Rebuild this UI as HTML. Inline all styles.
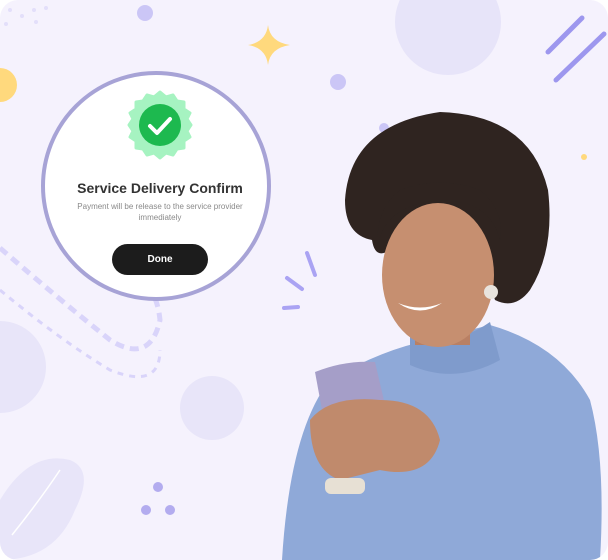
<!DOCTYPE html>
<html><head><meta charset="utf-8"><style>
html,body{margin:0;padding:0;background:#fff;}
.wrap{position:relative;width:608px;height:560px;overflow:hidden;background:#f5f2fd;border-radius:18px;font-family:"Liberation Sans",sans-serif;}
svg{position:absolute;left:0;top:0}
.t{position:absolute;left:40px;width:240px;text-align:center}
</style></head><body><div class="wrap">
<svg width="608" height="560" viewBox="0 0 608 560">
<circle cx="448" cy="22" r="53" fill="#e7e4f9"/>
<circle cx="145" cy="13" r="8" fill="#cbc6f6"/>
<circle cx="338" cy="82" r="8" fill="#cbc6f6"/>
<circle cx="384" cy="128" r="5" fill="#cbc6f6"/>
<circle cx="0" cy="85" r="17" fill="#ffd97d"/>
<circle cx="584" cy="157" r="3" fill="#ffd97d"/>
<path d="M268 25 Q270 42 290 45 Q270 48 268 65 Q266 48 248 45 Q266 42 268 25Z" fill="#ffd97d"/>
<g stroke="#9d97ee" stroke-width="5" stroke-linecap="round"><line x1="548" y1="52" x2="582" y2="18"/><line x1="556" y1="80" x2="604" y2="34"/></g>
<g fill="#e3dffa"><circle cx="10" cy="10" r="2"/><circle cx="22" cy="16" r="2"/><circle cx="34" cy="10" r="2"/><circle cx="46" cy="8" r="2"/><circle cx="6" cy="24" r="2"/><circle cx="36" cy="22" r="2"/></g>
<circle cx="0" cy="367" r="46" fill="#e8e5f9"/>
<circle cx="212" cy="408" r="32" fill="#e8e5f9"/>
<path d="M0 500 Q30 450 70 460 Q95 470 75 510 Q55 560 0 560Z" fill="#e8e5f9"/>
<path d="M12 535 Q40 500 60 470" stroke="#fff" stroke-width="1.5" fill="none"/>
<path d="M0 248 Q60 300 110 340 Q150 365 160 320 Q158 300 150 290" stroke="#d9d4fa" stroke-width="5" stroke-dasharray="9 6" fill="none"/>
<path d="M0 290 Q60 340 110 370 Q160 390 160 350" stroke="#d9d4fa" stroke-width="3" stroke-dasharray="6 6" fill="none"/>
<g fill="#b3acef"><circle cx="158" cy="487" r="5"/><circle cx="146" cy="510" r="5"/><circle cx="170" cy="510" r="5"/></g>
<g stroke="#aaa3f3" stroke-width="4" stroke-linecap="round"><line x1="307" y1="253" x2="315" y2="275"/><line x1="287" y1="278" x2="302" y2="289"/><line x1="284" y1="308" x2="298" y2="307"/></g>
<!-- woman -->
<path d="M282 560 Q290 430 330 380 Q380 350 430 340 L490 325 Q560 345 590 400 Q606 460 600 560Z" fill="#8fa9d8"/>
<path d="M410 330 Q450 350 490 322 L500 360 Q455 385 410 365Z" fill="#7f9bcc"/>
<path d="M345 200 Q350 125 440 112 Q530 115 548 190 Q555 250 530 290 Q515 310 495 300 L480 250 L390 250 Q375 260 372 240 Q345 235 345 200Z" fill="#2f2420"/>
<rect x="415" y="300" width="55" height="45" fill="#b98064"/>
<ellipse cx="438" cy="275" rx="56" ry="72" fill="#c68f70"/>
<path d="M378 245 Q385 205 440 200 Q490 200 500 240 Q505 210 480 190 Q440 175 400 190 Q375 210 378 245Z" fill="#2f2420"/>
<circle cx="491" cy="292" r="7" fill="#e8e3dd"/>
<path d="M398 303 Q420 318 442 303 Q420 312 398 303Z" fill="#fff"/>
<path d="M315 372 Q345 360 375 362 L385 405 Q350 410 322 410Z" fill="#a59ec8"/>
<path d="M310 420 Q330 395 380 400 Q430 400 440 440 Q430 480 380 470 L340 480 Q310 470 310 420Z" fill="#c08a6c"/>
<rect x="325" y="478" width="40" height="16" rx="6" fill="#e7e0d4"/>
</svg>
<svg width="608" height="560" viewBox="0 0 608 560">
<circle cx="156" cy="186" r="113" fill="#fff" stroke="#a7a3d6" stroke-width="4"/>
<g transform="translate(160,125)">
<path d="M0,-33 L6,-28 L13,-30 L17,-24 L24,-23 L24,-16 L30,-12 L27,-6 L31,0 L27,6 L30,12 L24,16 L24,23 L17,24 L13,30 L6,28 L0,33 L-6,28 L-13,30 L-17,24 L-24,23 L-24,16 L-30,12 L-27,6 L-31,0 L-27,-6 L-30,-12 L-24,-16 L-24,-23 L-17,-24 L-13,-30 L-6,-28Z" fill="#a6f3c1" stroke="#a6f3c1" stroke-width="3" stroke-linejoin="round"/>
<circle r="21" fill="#1db94f"/>
<path d="M-10 1 L-3 8 L10 -6" stroke="#fff" stroke-width="4" fill="none" stroke-linecap="round" stroke-linejoin="round"/>
</g>
<rect x="112" y="244" width="96" height="31" rx="15.5" fill="#1c1c1c"/>
</svg>
<div class="t" style="top:180px;font-size:14px;font-weight:bold;color:#333">Service Delivery Confirm</div>
<div class="t" style="top:201px;font-size:8px;line-height:11px;color:#8a8a8a">Payment will be release to the service provider<br>immediately</div>
<div class="t" style="left:112px;width:96px;top:254px;font-size:10px;font-weight:bold;color:#fff">Done</div>
</div></body></html>
